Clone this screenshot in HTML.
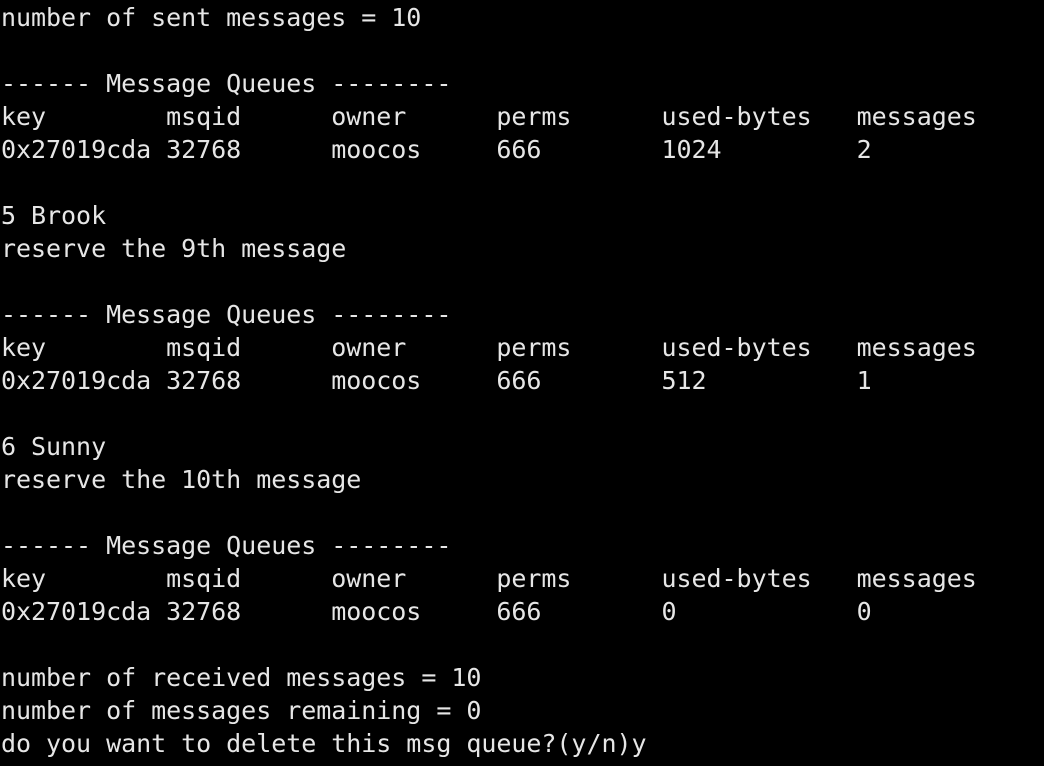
<!DOCTYPE html>
<html><head><style>
html,body{margin:0;padding:0;background:#000;width:1044px;height:766px;overflow:hidden}
pre{margin:0;padding:1px 0 0 1px;font-family:"DejaVu Sans Mono","Liberation Mono",monospace;font-size:25px;letter-spacing:-0.04px;line-height:33px;color:#e6e6e6;white-space:pre}
</style></head><body><pre>number of sent messages = 10

------ Message Queues --------
key        msqid      owner      perms      used-bytes   messages
0x27019cda 32768      moocos     666        1024         2

5 Brook
reserve the 9th message

------ Message Queues --------
key        msqid      owner      perms      used-bytes   messages
0x27019cda 32768      moocos     666        512          1

6 Sunny
reserve the 10th message

------ Message Queues --------
key        msqid      owner      perms      used-bytes   messages
0x27019cda 32768      moocos     666        0            0

number of received messages = 10
number of messages remaining = 0
do you want to delete this msg queue?(y/n)y</pre></body></html>
